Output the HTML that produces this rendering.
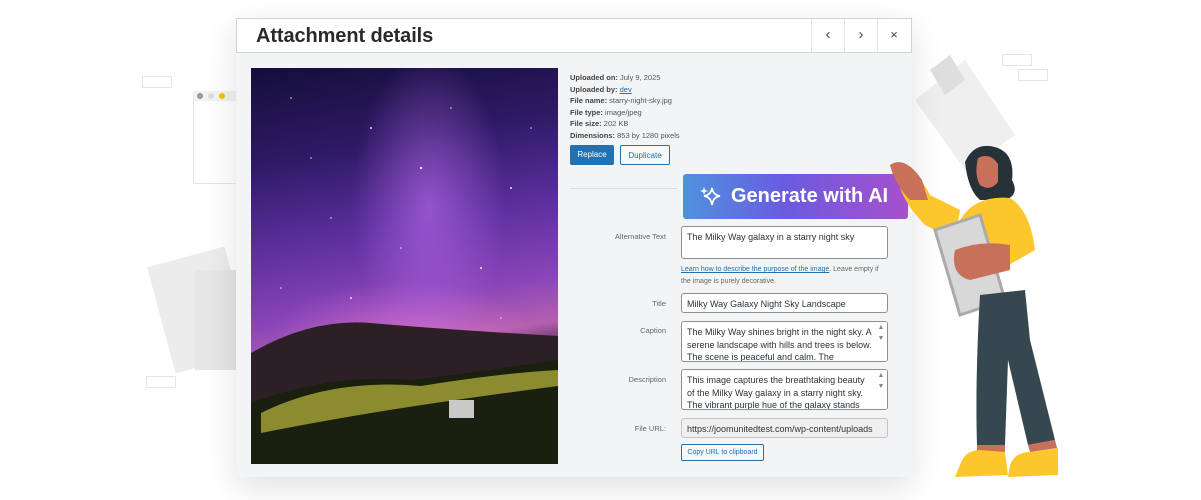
<!DOCTYPE html>
<html><head><meta charset="utf-8"><style>
*{box-sizing:border-box;margin:0;padding:0}
body{width:1201px;height:500px;background:#fff;position:relative;overflow:hidden;font-family:"Liberation Sans",sans-serif}
.abs{position:absolute}
.modal{left:236px;top:18px;width:676px;height:459px;background:#f3f4f6;box-shadow:0 10px 30px rgba(0,0,0,.12)}
.hdr{left:0;top:0;width:676px;height:35px;background:#fff;border:1px solid #d0d4da}
.hdr h1{position:absolute;left:19px;top:6px;font-size:20px;font-weight:bold;color:#2a2a2a;letter-spacing:-.1px}
.nb{position:absolute;top:0;width:33px;height:33px;border-left:1px solid #e2e4e7;color:#444;font-size:15px;text-align:center;line-height:32px}
.img{left:15px;top:50px;width:307px;height:396px;background:
radial-gradient(ellipse 110px 220px at 58% 35%,rgba(190,110,240,.6),transparent 70%),
radial-gradient(ellipse 170px 70px at 50% 68%,rgba(230,120,210,.55),transparent 80%),
linear-gradient(170deg,#140e3a 0%,#2e1a66 22%,#5e30a0 42%,#8a45b8 58%,#b460b0 68%,#402040 76%,#101010 100%)}
.meta{left:334px;top:54px;font-size:7.5px;color:#555;line-height:11.5px}
.meta b{color:#444}
.btn{font-size:8px;border-radius:2px;text-align:center;line-height:19px;height:20px}
.lab{font-size:7.5px;color:#666;text-align:right;width:100px;left:330px}
.inp{left:445px;width:207px;background:#fff;border:1px solid #8c8f94;border-radius:3px;font-size:9px;color:#2c3338;padding:4px 5px;line-height:12.5px;overflow:hidden;font-family:"Liberation Sans",sans-serif}
.sb{position:absolute;right:0;top:0;width:12px;height:100%;background:#fff;font-size:7px;color:#888;text-align:center;line-height:11px}
</style></head><body>
<div class="abs" style="left:142px;top:76px;width:30px;height:12px;border:1px solid #e5e5e5"></div>
<div class="abs" style="left:146px;top:376px;width:30px;height:12px;border:1px solid #e5e5e5"></div>
<div class="abs" style="left:1002px;top:54px;width:30px;height:12px;border:1px solid #e5e5e5"></div>
<div class="abs" style="left:1018px;top:69px;width:30px;height:12px;border:1px solid #e5e5e5"></div>
<div class="abs" style="left:193px;top:91px;width:50px;height:93px;border:1px solid #e5e5e5;border-top:10px solid #f2f2f2"></div>
<div class="abs" style="left:197px;top:93px;width:6px;height:6px;border-radius:50%;background:#999"></div>
<div class="abs" style="left:208px;top:93px;width:6px;height:6px;border-radius:50%;background:#ddd"></div>
<div class="abs" style="left:219px;top:93px;width:6px;height:6px;border-radius:50%;background:#f5c000"></div>
<div class="abs" style="left:160px;top:255px;width:80px;height:110px;background:#ececec;transform:rotate(-15deg)"></div>
<div class="abs" style="left:195px;top:270px;width:60px;height:100px;background:#e6e6e6"></div>
<svg class="abs" style="left:905px;top:40px" width="120" height="150"><path d="M10 60 L60 20 L110 95 L60 130 Z" fill="#efefef"/><path d="M25 30 L45 15 L60 40 L40 55Z" fill="#dedede"/></svg>

<div class="abs modal">
 <div class="abs hdr"><h1>Attachment details</h1>
  <div class="nb" style="left:574px">&#8249;</div><div class="nb" style="left:607px">&#8250;</div><div class="nb" style="left:640px;font-size:13px">&#215;</div></div>
 <div class="abs img"></div>
 <svg class="abs" style="left:15px;top:50px" width="307" height="396">
  <g fill="#fff" opacity=".85"><circle cx="40" cy="30" r=".8"/><circle cx="120" cy="60" r="1"/><circle cx="200" cy="40" r=".8"/><circle cx="260" cy="120" r="1"/><circle cx="80" cy="150" r=".8"/><circle cx="230" cy="200" r="1"/><circle cx="30" cy="220" r=".8"/><circle cx="170" cy="100" r="1.2"/><circle cx="280" cy="60" r=".8"/><circle cx="60" cy="90" r=".8"/><circle cx="150" cy="180" r=".8"/><circle cx="100" cy="230" r="1"/><circle cx="250" cy="250" r=".8"/></g>
  <path d="M0 285 Q60 250 120 255 Q200 262 307 268 L307 396 L0 396Z" fill="#2c2026"/>
  <path d="M0 335 Q80 305 160 312 Q240 302 307 292 L307 396 L0 396Z" fill="#1a1f10"/>
  <path d="M10 345 Q80 310 170 318 Q250 305 307 302 L307 318 Q200 332 120 345 Q60 355 10 365Z" fill="#a8a838" opacity=".8"/>
  <rect x="198" y="332" width="25" height="18" fill="#ddd" opacity=".9"/>
 </svg>
 <div class="abs meta"><b>Uploaded on:</b> July 9, 2025<br><b>Uploaded by:</b> <span style="color:#2271b1;text-decoration:underline">dev</span><br><b>File name:</b> starry-night-sky.jpg<br><b>File type:</b> image/jpeg<br><b>File size:</b> 202 KB<br><b>Dimensions:</b> 853 by 1280 pixels</div>
 <div class="abs btn" style="left:334px;top:127px;width:44px;background:#2271b1;color:#fff">Replace</div>
 <div class="abs btn" style="left:384px;top:127px;width:50px;border:1px solid #2271b1;color:#2271b1;background:#f6f7f7">Duplicate</div>
 <div class="abs" style="left:334px;top:170px;width:107px;height:1px;background:#dcdcde"></div>
 <div class="abs" style="left:447px;top:156px;width:225px;height:45px;border-radius:3px;background:linear-gradient(90deg,#4e93de,#6a5be0 45%,#a750cc);color:#fff;font-size:20px;line-height:45px;padding-left:48px;font-weight:bold">Generate with AI</div>
 <svg class="abs" style="left:464px;top:168px" width="22" height="22"><path d="M12 2 Q13 9 20 10 Q13 11 12 19 Q11 11 4 10 Q11 9 12 2Z" fill="none" stroke="#fff" stroke-width="1.8"/><path d="M4 1 L5 4 L8 5 L5 6 L4 9 L3 6 L0 5 L3 4Z" fill="#fff"/></svg>

 <div class="abs lab" style="top:214px">Alternative Text</div>
 <div class="abs inp" style="top:208px;height:33px">The Milky Way galaxy in a starry night sky</div>
 <div class="abs" style="left:445px;top:246px;font-size:7px;color:#666;line-height:12px;width:200px"><span style="color:#2271b1;text-decoration:underline">Learn how to describe the purpose of the image</span>. Leave empty if the image is purely decorative.</div>
 <div class="abs lab" style="top:281px">Title</div>
 <div class="abs inp" style="top:275px;height:20px">Milky Way Galaxy Night Sky Landscape</div>
 <div class="abs lab" style="top:308px">Caption</div>
 <div class="abs inp" style="top:303px;height:41px;padding-right:14px">The Milky Way shines bright in the night sky. A serene landscape with hills and trees is below. The scene is peaceful and calm. The<div class="sb">▲<br>▼</div></div>
 <div class="abs lab" style="top:357px">Description</div>
 <div class="abs inp" style="top:351px;height:41px;padding-right:14px">This image captures the breathtaking beauty of the Milky Way galaxy in a starry night sky. The vibrant purple hue of the galaxy stands<div class="sb">▲<br>▼</div></div>
 <div class="abs lab" style="top:406px">File URL:</div>
 <div class="abs inp" style="top:400px;height:20px;background:#f0f0f1;border-color:#c3c4c7;white-space:nowrap">https://joomunitedtest.com/wp-content/uploads</div>
 <div class="abs btn" style="left:445px;top:426px;width:83px;height:17px;line-height:15px;font-size:7px;border:1px solid #2271b1;color:#2271b1;background:#f6f7f7">Copy URL to clipboard</div>
</div>

<svg class="abs" style="left:880px;top:140px" width="200" height="360">
 <path d="M85 22 Q95 0 118 8 Q135 15 132 40 Q140 55 125 60 L100 60 Q88 50 85 22Z" fill="#263238"/>
 <path d="M98 18 Q110 12 118 24 L118 42 Q110 52 100 45 Q94 35 98 18Z" fill="#c8705a"/>
 <path d="M80 80 Q95 55 130 58 Q150 70 155 110 L120 130 L70 125Z" fill="#fcc62d"/>
 <path d="M15 30 Q35 25 50 55 L80 70 L75 100 L45 85 Q20 60 15 30Z" fill="#fcc62d"/>
 <path d="M10 25 Q25 15 42 40 L48 60 L30 60 Q15 45 10 25Z" fill="#c8705a"/>
 <path d="M55 90 L100 75 L125 160 L80 175Z" fill="#d8d8d8" stroke="#aaa" stroke-width="3"/>
 <path d="M75 110 Q100 100 130 105 L130 130 L90 140 Q70 135 75 110Z" fill="#c8705a"/>
 <path d="M100 155 L145 150 L150 200 L175 300 L148 305 L128 220 L125 305 L97 305 Q95 240 100 155Z" fill="#37474f"/>
 <path d="M97 305 L125 305 L125 312 L97 312Z M148 305 L175 300 L177 308 L150 312Z" fill="#c8705a"/>
 <path d="M80 325 Q85 310 100 310 L125 312 L128 335 L75 337Z" fill="#fcc62d"/>
 <path d="M130 325 Q135 312 150 312 L178 308 L178 335 L128 337Z" fill="#fcc62d"/>
</svg>
</body></html>
